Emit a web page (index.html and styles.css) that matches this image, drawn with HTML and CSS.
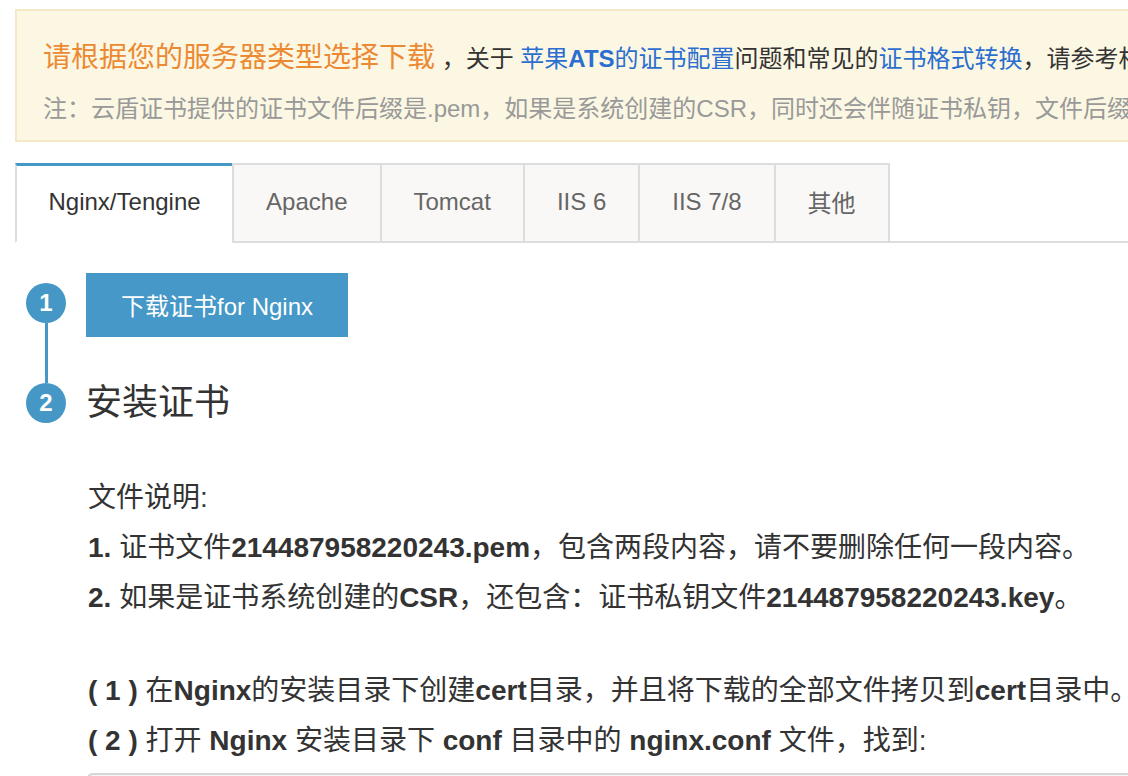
FILE: index.html
```html
<!DOCTYPE html>
<html lang="zh-CN">
<head>
<meta charset="utf-8">
<title>证书下载</title>
<link rel="stylesheet" href="styles.css">
</head>
<body>
<div class="page">
  <div class="notice">
    <div class="notice-main">
      <span class="notice-title">请根据您的服务器类型选择下载</span> ，关于 <a class="link">苹果<b>ATS</b>的证书配置</a>问题和常见的<a class="link">证书格式转换</a>，请参考相关文档。
    </div>
    <div class="notice-note">注：云盾证书提供的证书文件后缀是.pem，如果是系统创建的CSR，同时还会伴随证书私钥，文件后缀是.key。</div>
  </div>

  <div class="tabs">
    <div class="tab tab-active">Nginx/Tengine</div>
    <div class="tab">Apache</div>
    <div class="tab">Tomcat</div>
    <div class="tab">IIS 6</div>
    <div class="tab">IIS 7/8</div>
    <div class="tab tab-last">其他</div>
    <div class="tabs-rest"></div>
  </div>

  <div class="step step-first">
    <div class="marker">
      <div class="circle">1</div>
      <div class="line"></div>
    </div>
    <div class="step-body">
      <div class="btn">下载证书for Nginx</div>
    </div>
  </div>

  <div class="step">
    <div class="marker">
      <div class="circle">2</div>
    </div>
    <div class="step-body">
      <div class="step-title">安装证书</div>
      <div class="text-block">
        <p>文件说明:</p>
        <p><b>1.</b> 证书文件<b>214487958220243.pem</b>，包含两段内容，请不要删除任何一段内容。</p>
        <p><b>2.</b> 如果是证书系统创建的<b>CSR</b>，还包含：证书私钥文件<b>214487958220243.key</b>。</p>
      </div>
      <div class="text-block text-block-2">
        <p><b>( 1 )</b> 在<b>Nginx</b>的安装目录下创建<b>cert</b>目录，并且将下载的全部文件拷贝到<b>cert</b>目录中。</p>
        <p><b>( 2 )</b> 打开 <b>Nginx</b> 安装目录下 <b>conf</b> 目录中的 <b>nginx.conf</b> 文件，找到:</p>
      </div>
      <div class="code-box"></div>
    </div>
  </div>
</div>
</body>
</html>
```
FILE: styles.css
```css
html, body {
  margin: 0;
  padding: 0;
  background: #fff;
  overflow: hidden;
}
body {
  font-family: "Liberation Sans", "Noto Sans CJK SC", sans-serif;
  color: #333;
}
.page {
  width: 1500px;
  padding: 9px 0 0 15px;
  box-sizing: border-box;
}

/* notice */
.notice {
  border: 2px solid #f5e8c6;
  background: #fbf7e3;
  padding: 27px 0 11px 26px;
  white-space: nowrap;
}
.notice-main {
  font-size: 24px;
  line-height: 40px;
  color: #333;
}
.notice-title {
  font-size: 28px;
  color: #eb8a33;
}
.link {
  color: #2b6ecf;
  text-decoration: none;
}
.notice-note {
  margin-top: 10px;
  font-size: 24px;
  line-height: 40px;
  color: #999;
}

/* tabs */
.tabs {
  display: flex;
  margin-top: 21px;
  height: 80px;
}
.tab {
  box-sizing: border-box;
  height: 80px;
  padding: 0 32px 3px;
  display: flex;
  align-items: center;
  font-size: 24px;
  color: #666;
  background: #f9f8f6;
  border-top: 2px solid #ddd;
  border-left: 2px solid #ddd;
  border-bottom: 2px solid #ddd;
  white-space: nowrap;
}
.tab-last {
  border-right: 2px solid #ddd;
}
.tab-active {
  background: #fff;
  color: #333;
  border-top: 3px solid #4598c6;
  border-bottom: 2px solid #fff;
  padding: 0 31.5px 3px;
}
.tabs-rest {
  flex: 1;
  border-bottom: 2px solid #ddd;
}

/* steps */
.step {
  display: flex;
}
.step-first {
  margin-top: 30px;
}
.marker {
  width: 40px;
  margin: 0 20px 0 11px;
  display: flex;
  flex-direction: column;
  align-items: center;
  flex: none;
}
.step-first .marker {
  padding-top: 10px;
}
.circle {
  width: 40px;
  height: 40px;
  border-radius: 50%;
  background: #4598c6;
  color: #fff;
  font-size: 24px;
  font-weight: bold;
  display: flex;
  align-items: center;
  justify-content: center;
  flex: none;
}
.line {
  flex: 1;
  width: 3px;
  background: #4598c6;
}
.step-first .step-body {
  padding-bottom: 46px;
}
.btn {
  width: 262px;
  height: 64px;
  padding-bottom: 2px;
  box-sizing: border-box;
  background: #4598c7;
  color: #fff;
  font-size: 24px;
  display: flex;
  align-items: center;
  justify-content: center;
  white-space: nowrap;
}
.step-title {
  font-size: 36px;
  line-height: 40px;
  color: #333;
}
.text-block {
  margin-top: 50px;
  font-size: 28px;
  line-height: 50px;
  color: #333;
  white-space: nowrap;
}
.text-block p {
  margin: 0;
  padding-left: 2px;
}
.text-block-2 {
  margin-top: 43px;
}
.code-box {
  margin-top: 7px;
  width: 1300px;
  height: 120px;
  border: 2px solid #d6d6d6;
  border-radius: 7px;
  background: #f6f6f6;
}
```
